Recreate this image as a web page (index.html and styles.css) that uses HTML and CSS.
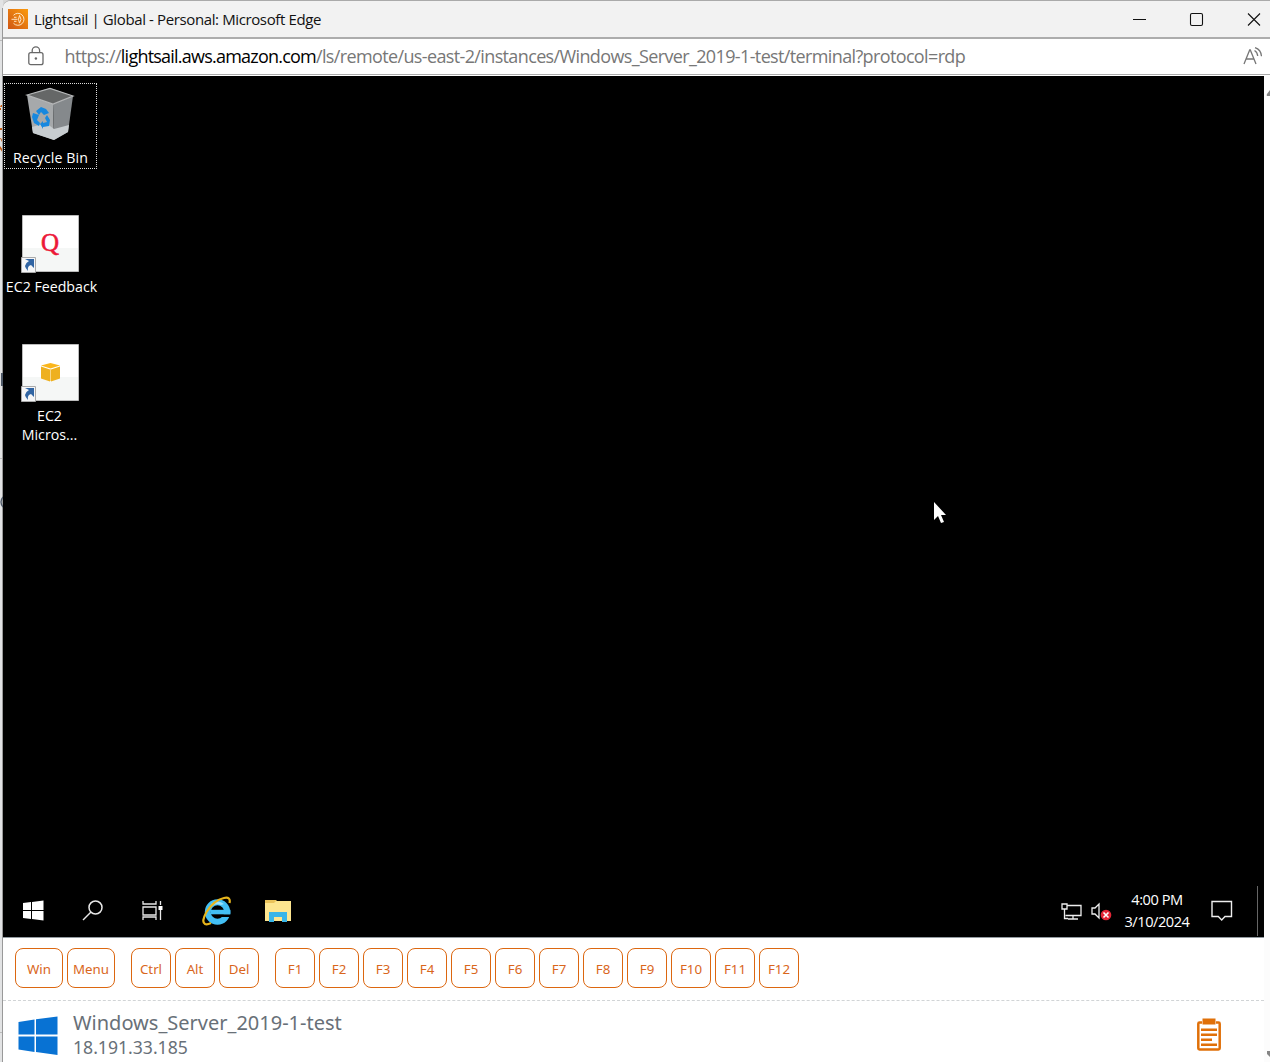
FILE: index.html
```html
<!DOCTYPE html>
<html lang="en">
<head>
<meta charset="utf-8">
<title>Lightsail | Global</title>
<link rel="stylesheet" href="styles.css">
</head>
<body>
<div class="screen">
  <div class="backdrop">
    <svg width="3" height="1062" viewBox="0 0 3 1062">
      <path fill="#e2e3e4" d="M0 0h3v1062H0z"/>
      <path fill="#bbb" d="M0 458h3v1H0zM0 1032h3v1H0zM0 40h3v1H0z"/>
      <path fill="#c95f16" d="M1 105h2v2H0zM0 108h1v2H0zM0 128h3v2H0zM0 138h1l2 4v2zM0 146l3 4v3l-3-4z"/>
      <path fill="#999" d="M2 8h1v1054H2z"/>
      <path fill="#4f5968" d="M1 373h2v13H1z"/>
      <path fill="none" stroke="#4f5968" stroke-width="1.4" d="M3 497Q-1 502 3 507"/>
    </svg>
  </div>
  <div class="window">
    <header class="titlebar">
      <svg class="favicon" width="20" height="20" viewBox="0 0 20 20">
        <defs><linearGradient id="lightsail" x1="0" y1="1" x2="1" y2="0"><stop offset="0" stop-color="#cf5716"/><stop offset="1" stop-color="#fb9a0c"/></linearGradient></defs>
        <path fill="url(#lightsail)" d="M0 0h20v20H0z"/>
        <path fill="none" stroke="#ffe5c4" stroke-width="1" d="M5.500 6.300a6 6 0 1 1 0 8M3.500 10.300h6M6 8.300h2.500M6 12.300h2.500M11.500 6.500q-2 4 0 7.600 3-3.800 0-7.600z"/>
      </svg>
      <span class="title">Lightsail | Global - Personal: Microsoft Edge</span>
      <svg class="controls" width="130" height="16" viewBox="0 0 130 16" fill="none" stroke="#111" stroke-width="1.100">
        <path d="M2 8.500h13M117 2.500l12 12M129 2.500l-12 12"/>
        <rect x="59.500" y="2.500" width="12" height="12" rx="1.500"/>
      </svg>
    </header>
    <div class="addressbar">
      <svg class="lock" width="16" height="20" viewBox="0 0 16 20" fill="none" stroke="#686868" stroke-width="1.300">
        <rect x=".8" y="6.700" width="14.200" height="12" rx="2"/><path d="M4.200 6.700V4.500a3.700 3.700 0 0 1 7.400 0v2.200"/><circle cx="7.900" cy="12.500" r="1.200" fill="#686868" stroke="none"/>
      </svg>
      <span class="url">https://<b>lightsail.aws.amazon.com</b>/ls/remote/us-east-2/instances/Windows_Server_2019-1-test/terminal?protocol=rdp</span>
      <svg class="read" width="20" height="18" viewBox="0 0 20 18" fill="none" stroke="#777" stroke-width="1.300">
        <path d="M1 17L6.700 3h.6l5.700 14M3 12h8M11.500 3.500q3 1.800 3.200 5.500M12 .7q6 2 6.500 8.500"/>
      </svg>
    </div>
    <div class="viewport">
      <div class="page">
        <main class="desktop">
          <div class="icons">
            <div class="shortcut selected">
              <svg class="bin" width="50" height="56" viewBox="0 0 50 56">
                <path fill="#656767" d="M2 8L25 1l23 8-20 8z"/>
                <path fill="#a6a9ab" d="M2 8l26 9 1 36-21-7z"/><path fill="#85898c" d="M48 9l-20 8 1 36 14-8z"/>
                <path fill="#c8cdd0" d="M7 40l14-4 8 6 15-4-1 7-14 8-21-7z"/>
                <path fill="none" stroke="#b5b7b8" stroke-width="1.200" d="M2 8l23-6.500L48 9l-20 8z"/>
                <path fill="#1788df" d="M11 24l5-4 5 2 3 4-5 2-3-3-2 3zM8 26l6 2-2 5 3 3-1 3-5-3-2-6zM22 28l3 5-1 6-6 1 0 2-3-5 3-3v2l4-1-2-4z"/>
              </svg>
              <span class="label bin-label">Recycle Bin</span>
            </div>
            <div class="shortcut">
              <svg width="60" height="60" viewBox="0 0 60 60">
                <path fill="#fff" stroke="#bbb" d="M2.500 1.500h56v56h-56z"/><path fill="#f5f7f6" d="M3 34h55v23H3z"/>
                <text class="q" x="21" y="37">Q</text>
                <path fill="#f5f6f7" stroke="#aaa" d="M1.500 43.500h14v15h-14z"/><path fill="#3165a3" d="M5 45h9v9l-3-3q-4 1-3 6-6-6 1-10z"/>
              </svg>
              <span class="label feedback-label">EC2 Feedback</span>
            </div>
            <div class="shortcut">
              <svg width="60" height="60" viewBox="0 0 60 60">
                <path fill="#fff" stroke="#bbb" d="M2.500 1.500h56v56h-56z"/><path fill="#f5f7f6" d="M3 34h55v23H3z"/>
                <path fill="#fbb61b" d="M21 22.500l9.500-2.500 9.500 2.500-9.500 3z"/><path fill="#eeb01f" d="M21 23.500l9 3v12l-9-3zM40 23.500l-9 3v12l9-3z"/>
                <path stroke="#f9d889" d="M30.500 26v12"/>
                <path fill="#f5f6f7" stroke="#aaa" d="M1.500 43.500h14v15h-14z"/><path fill="#3165a3" d="M5 45h9v9l-3-3q-4 1-3 6-6-6 1-10z"/>
              </svg>
              <span class="label micros-label">EC2<br>Micros...</span>
            </div>
          </div>
          <svg class="pointer" width="14" height="24" viewBox="0 0 14 24"><path fill="#fff" d="M1 1v18l4-4 3 7 3-1-3-7h5z"/></svg>
          <div class="taskbar">
            <div class="launchers">
              <svg width="21" height="21" viewBox="0 0 21 21" fill="#fff"><path d="M0 3l8-1v8H0zM9 2l11.500-1.500V10H9zM0 11h8v8l-8-1zM9 11h11.500v9.500L9 19z"/></svg>
              <svg width="21" height="21" viewBox="0 0 21 21" fill="none" stroke="#e8e8e8" stroke-width="1.500"><circle cx="13.500" cy="7.500" r="6.500"/><path d="M9 12l-8 8"/></svg>
              <svg width="21" height="21" viewBox="0 0 21 21" fill="none" stroke="#e8e8e8" stroke-width="1.300"><path d="M1 1v3h13V1M1 7h13v8H1zM1 20v-3h13v3M18.500 1v4M18.500 10v10"/><path fill="#fff" stroke="none" d="M16.500 6h4v4h-4z"/></svg>
              <svg width="30" height="30" viewBox="0 0 30 30">
                <circle cx="15.500" cy="16" r="9.700" fill="none" stroke="#43bff4" stroke-width="6"/><path fill="#000" d="M18 18.300h12v2.700H19z"/><path fill="#43bff4" d="M9 13.800h19.500v4.500H9z"/><path fill="#9ce2fc" d="M9 8q7-5 13 0l-3 1q-5-2-9 1z"/>
                <path fill="none" stroke="#e7b51c" stroke-width="2.200" d="M27.500 7Q29 .5 22 2 12 4 4.500 16-1 26 3 28q2 1 6-1"/>
              </svg>
              <svg width="28" height="24" viewBox="0 0 28 24"><path fill="#eac35b" d="M1 1h11l2 2h12v4H1z"/><path fill="#fde58f" d="M1 4h9l2-2h15v20H1z"/><path fill="#39b5e8" d="M5 13h18v10h-5v-5h-8v5H5z"/></svg>
            </div>
            <div class="tray">
              <svg class="net" width="22" height="18" viewBox="0 0 22 18" fill="none" stroke="#eee" stroke-width="1.300"><path d="M6 2.500h14v10H4.500M1 1h5v5H1zM3.500 6v9.500H7M12 12.500v3M7 16h10"/></svg>
              <svg class="sound" width="21" height="20" viewBox="0 0 21 20"><path fill="none" stroke="#eee" stroke-width="1.300" d="M1 6h3l4-4v14l-4-4H1z"/><circle cx="15" cy="13" r="5.300" fill="#e32636"/><path stroke="#fff" stroke-width="1.600" d="M12.500 10.500l5 5m0-5l-5 5"/></svg>
              <div class="clock"><span class="time">4:00 PM</span><span class="date">3/10/2024</span></div>
              <svg class="notice" width="22" height="22" viewBox="0 0 22 22" fill="none" stroke="#eee" stroke-width="1.400"><path d="M1 1.500h19.500v15H14L10.700 20l-3.400-3.500H1z"/></svg>
              <i class="peek"></i>
            </div>
          </div>
        </main>
        <div class="keys">
          <div class="group"><button class="wide">Win</button><button class="wide">Menu</button></div>
          <div class="group"><button>Ctrl</button><button>Alt</button><button>Del</button></div>
          <div class="group"><button>F1</button><button>F2</button><button>F3</button><button>F4</button><button>F5</button><button>F6</button><button>F7</button><button>F8</button><button>F9</button><button>F10</button><button>F11</button><button>F12</button></div>
        </div>
        <footer class="instance">
          <svg class="winlogo" width="40" height="40" viewBox="0 0 40 40" fill="#0872d3"><path d="M.5 6L16.500 3.500V18.500H.5zM18 3.300L39.500.5v18H18zM.5 20.500h16V36L.5 33.500zM18 20.500h21.500v18.500L18 36z"/></svg>
          <div class="meta"><div class="name">Windows_Server_2019-1-test</div><div class="ip">18.191.33.185</div></div>
          <svg class="clipboard" width="26" height="34" viewBox="0 0 26 34"><path fill="none" stroke="#e07009" stroke-width="2.500" d="M6 4.500H3.500q-1.200 0-1.200 1.200v24.600q0 1.200 1.200 1.200h19q1.200 0 1.200-1.200V5.700q0-1.200-1.200-1.200H20"/><path fill="#e07009" d="M6.500.500h13v6h-13zM5 10.500h16V13H5zM5 15.500h16V18H5zM5 20.500h11V23H5zM5 25.500h16V28H5z"/></svg>
        </footer>
      </div>
      <div class="scrollbar"><svg width="6" height="6" viewBox="0 0 6 6"><path fill="#858585" d="M6 0v6H4q-2 0-1-2z"/></svg><svg width="6" height="8" viewBox="0 0 6 8"><path fill="#858585" d="M3 1h3v6L3 4z"/></svg></div>
    </div>
  </div>
</div>
</body>
</html>
```
FILE: styles.css
```css
* { box-sizing: border-box; }
body { margin: 0; overflow: hidden; background: #fff; font-family: "Open Sans", "Noto Sans", sans-serif; }
svg { display: block; flex: none; }
.screen { display: flex; width: 1270px; height: 1062px; overflow: hidden; background: #d6d6d6; }
.backdrop { width: 3px; }
.window { width: 1267px; height: 1062px; display: flex; flex-direction: column; background: #fff; border-top: 1px solid #aaa; border-top-left-radius: 8px; overflow: hidden; white-space: nowrap; }
.titlebar { height: 38px; display: flex; align-items: center; background: #f2f2f2; border-bottom: 2px solid #adadad; padding-left: 5px; }
.title { margin-left: 6px; font-size: 15px; letter-spacing: -.38px; color: #111; }
.controls { margin-left: auto; margin-right: 9px; }
.addressbar { height: 36px; display: flex; align-items: center; padding-left: 24.500px; border-bottom: 1px solid #aaa; }
.url { margin: -1px 0 0 21px; font-size: 18px; letter-spacing: -.63px; color: #777; }
.url b { font-weight: 400; letter-spacing: -.78px; color: #000; }
.read { margin: -2px 7px 0 auto; }
.lock { margin-top: -1px; }
.viewport { display: flex; flex: 1; padding-top: 1px; }
.page { width: 1261px; }
.desktop { position: relative; height: 862px; display: flex; flex-direction: column; justify-content: space-between; background: #000; border-bottom: 1px solid #929aa0; color: #fff; }
.icons { width: 94px; padding: 7px 0 0 1px; }
.shortcut { width: 93px; height: 129px; display: flex; flex-direction: column; align-items: center; padding-top: 2px; }
.shortcut svg { margin-left: -2px; }
.shortcut.selected { height: 86px; border: 1px dotted #ddd; padding-top: 3px; margin-bottom: 43px; }
.label { margin-top: 3px; font-size: 14.2px; line-height: 19px; text-align: center; }
.label.bin-label { margin-top: 5px; letter-spacing: .1px; }
.feedback-label { margin-left: 2px; }
.micros-label { margin-left: -2px; }
.q { font: 25px "Liberation Serif", serif; fill: #ec1838; stroke: #ec1838; stroke-width: .6px; }
.pointer { position: absolute; left: 930px; top: 425px; }
.taskbar { height: 52px; display: flex; justify-content: space-between; }
.launchers { display: flex; align-items: center; padding: 0 0 1px 20px; }
.launchers svg { margin-right: 39px; }
.launchers svg:nth-child(1) { margin-right: 38px; }
.launchers svg:nth-child(4) { margin-right: 32px; }
.tray { display: flex; align-items: center; }
.net { margin-top: 2px; }
.sound { margin: 2px 0 0 8px; }
.clock { width: 66px; margin: -3px 0 0 12px; display: flex; flex-direction: column; align-items: center; font-size: 14.6px; line-height: 22px; letter-spacing: -.45px; }
.notice { margin-left: 21px; }
.peek { height: 50px; border-left: 1px solid #666; margin: 0 6px 0 24px; }
.keys { height: 63px; display: flex; gap: 16px; padding: 10px 12px; border-bottom: 1px dashed #d1d4d6; }
.group { display: flex; gap: 4px; }
button { width: 40px; height: 40px; padding: 2px 0 0; border: 1px solid #dc6710; border-radius: 8px; background: #fff; color: #d9661c; font: 450 13.3px "Noto Sans", sans-serif; }
button.wide { width: 48px; }
.instance { height: 61px; display: flex; padding-left: 15px; }
.winlogo { margin-top: 15px; }
.meta { margin-left: 15px; color: #687078; font-family: "Noto Sans", sans-serif; }
.name { font-size: 20px; line-height: 25px; margin-top: 9px; }
.ip { font-size: 17.6px; line-height: 24px; }
.clipboard { margin: 17px 42px 0 auto; }
.scrollbar { width: 6px; background: #fcfcfc; display: flex; flex-direction: column; justify-content: space-between; padding: 14px 0 4px; }
```
